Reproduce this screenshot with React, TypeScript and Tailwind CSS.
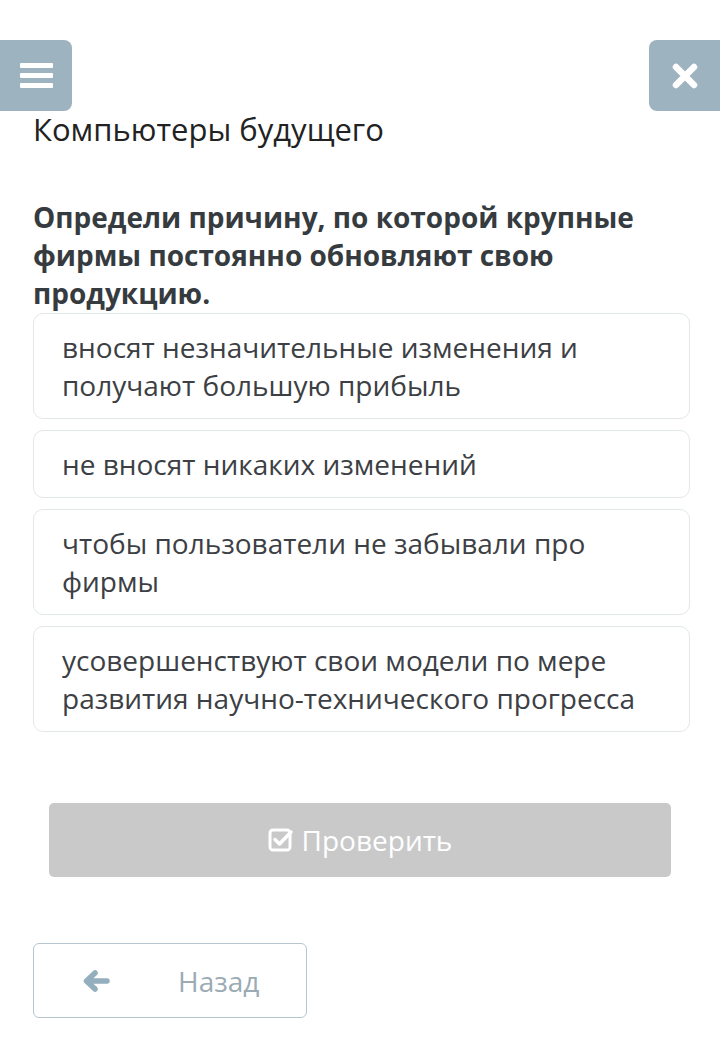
import React from 'react';

const options = [
  'вносят незначительные изменения и получают большую прибыль',
  'не вносят никаких изменений',
  'чтобы пользователи не забывали про фирмы',
  'усовершенствуют свои модели по мере развития научно-технического прогресса',
];

const App: React.FC = () => {
  return (
    <div
      className="w-[720px] h-[1058px] bg-white overflow-hidden"
      style={{ fontFamily: '"Open Sans", "Noto Sans", sans-serif' }}
    >
      {/* Top buttons */}
      <div className="flex justify-between pt-[40px]">
        <button className="w-[72px] h-[71px] bg-[#9db3bf] rounded-r-[8px] flex flex-col items-center justify-center gap-[5px]">
          <span className="block w-[33px] h-[5px] bg-white rounded-[1px]" />
          <span className="block w-[33px] h-[5px] bg-white rounded-[1px]" />
          <span className="block w-[33px] h-[5px] bg-white rounded-[1px]" />
        </button>
        <button className="w-[71px] h-[71px] bg-[#9db3bf] rounded-l-[8px] flex items-center justify-center">
          <svg width="28" height="28" viewBox="0 0 28 28">
            <path d="M5 5 L23 23 M23 5 L5 23" stroke="white" strokeWidth="6.5" strokeLinecap="round" />
          </svg>
        </button>
      </div>

      <div className="px-[33px]">
        <h1 className="text-[31px] leading-[36px] text-[#222222] font-normal">Компьютеры будущего</h1>

        <h2 className="mt-[51px] text-[28px] leading-[38px] font-bold text-[#363b40]">
          Определи причину, по которой крупные фирмы постоянно обновляют свою продукцию.
        </h2>

        <div className="flex flex-col gap-[11px] mt-[1px] w-[657px]">
          {options.map((o) => (
            <div
              key={o}
              className="border border-[#e2e8ea] rounded-[10px] px-[28px] py-[14px] text-[28px] leading-[38px] text-[#3c4044]"
            >
              {o}
            </div>
          ))}
        </div>
      </div>

      <div className="px-[49px] mt-[71px]">
        <button className="w-[622px] h-[74px] bg-[#c9c9c9] rounded-[5px] flex items-center justify-center gap-[8px] text-white text-[28px]">
          <svg width="26" height="26" viewBox="0 0 26 26" fill="none">
            <rect x="2" y="3" width="20" height="20" rx="3" stroke="white" strokeWidth="3" />
            <path d="M7 12.5 L11.5 17 L23 5" stroke="white" strokeWidth="3.5" strokeLinecap="round" strokeLinejoin="round" />
          </svg>
          <span>Проверить</span>
        </button>
      </div>

      <div className="px-[33px] mt-[66px]">
        <button className="w-[274px] h-[75px] border border-[#b5c6ce] rounded-[6px] flex items-center text-[#9aabb4] text-[28px]">
          <svg className="ml-[48px]" width="28" height="22" viewBox="0 0 28 22" fill="none">
            <path d="M25 11 H6 M13 3 L4.5 11 L13 19" stroke="#93aebc" strokeWidth="5.5" strokeLinecap="round" strokeLinejoin="round" />
          </svg>
          <span className="ml-[68px]">Назад</span>
        </button>
      </div>
    </div>
  );
};

export default App;
